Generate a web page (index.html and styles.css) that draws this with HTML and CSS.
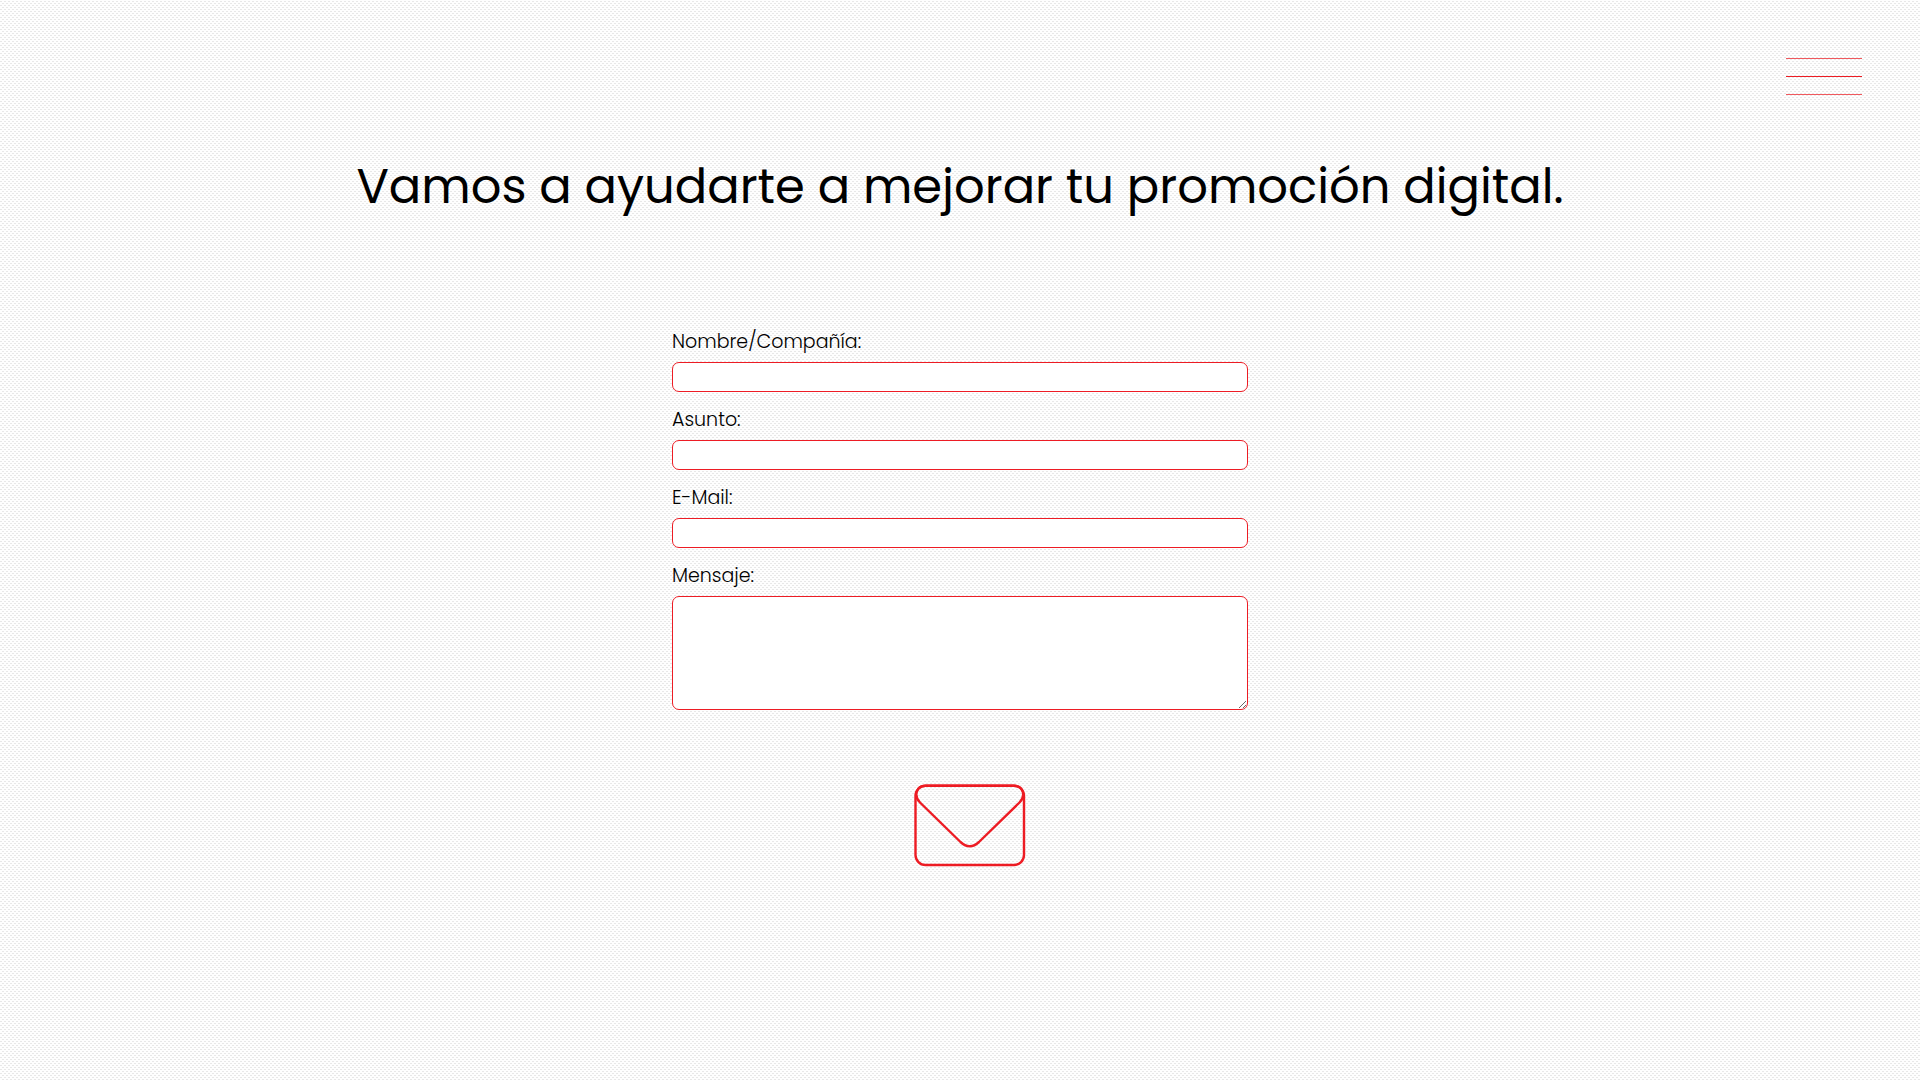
FILE: index.html
```
<!DOCTYPE html>
<html lang="es">
<head>
<meta charset="utf-8">
<meta name="viewport" content="width=device-width, initial-scale=1">
<title>Contacto</title>
<link rel="stylesheet" href="styles.css">
</head>
<body>
<header class="topbar">
  <button class="menu" type="button" aria-label="Abrir menú">
    <span class="menu-line"></span>
    <span class="menu-line menu-line-mid"></span>
    <span class="menu-line"></span>
  </button>
</header>
<main class="contact">
  <h1 class="title">Vamos a ayudarte a mejorar tu promoción digital.</h1>
  <form class="form">
    <div class="field">
      <label class="label" for="nombre">Nombre/Compañía:</label>
      <input class="control" id="nombre" name="nombre" type="text">
    </div>
    <div class="field">
      <label class="label" for="asunto">Asunto:</label>
      <input class="control" id="asunto" name="asunto" type="text">
    </div>
    <div class="field">
      <label class="label" for="email">E-Mail:</label>
      <input class="control" id="email" name="email" type="email">
    </div>
    <div class="field">
      <label class="label" for="mensaje">Mensaje:</label>
      <textarea class="control message" id="mensaje" name="mensaje"></textarea>
    </div>
    <button class="send" type="submit" aria-label="Enviar">
      <svg class="envelope" viewBox="0 0 112 84" fill="none" stroke="#ed1c24" stroke-width="2.4">
        <rect x="1.5" y="1.8" width="108.5" height="79.2" rx="10"/>
        <path d="M11.500 1.800H100C109.500 1.800 112 12 105.500 18.500L65 58Q55.750 66.500 46.500 58L6 18.500C-.500 12 2 1.800 11.500 1.800Z"/>
      </svg>
    </button>
  </form>
</main>
</body>
</html>
```
FILE: styles.css
```
* {
  box-sizing: border-box;
}

body {
  margin: 0;
  min-height: 100vh;
  color: #000;
  font-family: Poppins, Inter, "Noto Sans", sans-serif;
  background-color: #fefefe;
  background-image: url("data:image/svg+xml,%3Csvg xmlns='http://www.w3.org/2000/svg' width='4' height='4' shape-rendering='crispEdges' fill='%23e8e8e8'%3E%3Cpath d='M0 1h2v1H0zM2 3h2v1H2z'/%3E%3C/svg%3E");
}

.topbar {
  display: flex;
  justify-content: flex-end;
  padding: 58px 58px 0;
}

.menu {
  display: flex;
  flex-direction: column;
  gap: 17px;
  width: 76px;
  padding: 0;
  border: 0;
  background: none;
  cursor: pointer;
}

.menu-line {
  width: 100%;
  height: 1px;
  background: #f0595e;
}

.menu-line-mid {
  background: #ed1c24;
}

.contact {
  display: flex;
  flex-direction: column;
  align-items: center;
  padding: 56px 0 64px;
}

.title {
  margin: 0;
  padding: 0 16px;
  font-size: 48px;
  line-height: 72px;
  font-weight: 400;
  text-align: center;
}

.form {
  display: flex;
  flex-direction: column;
  gap: 12px;
  width: 30%;
  min-width: 288px;
  margin-top: 103px;
}

.field {
  display: flex;
  flex-direction: column;
  gap: 4px;
}

.label {
  font-size: 19px;
  line-height: 32px;
  font-weight: 300;
}

.control {
  width: 100%;
  height: 30px;
  padding: 4px 8px;
  border: 1px solid #ed1c24;
  border-radius: 7px;
  outline: 0;
  background: #fff;
  font: inherit;
}

.message {
  height: 114px;
  resize: both;
}

.send {
  align-self: center;
  margin: 62px 0 0 20px;
  padding: 0;
  border: 0;
  background: none;
  cursor: pointer;
}

.envelope {
  display: block;
  width: 112px;
  height: 84px;
}
```
